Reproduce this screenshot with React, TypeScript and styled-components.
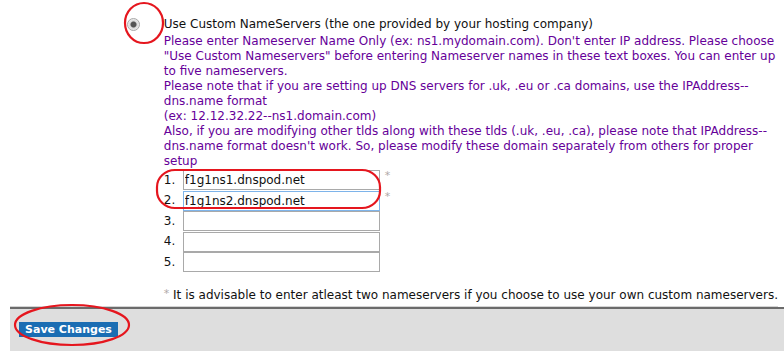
import styled, { createGlobalStyle } from "styled-components";

const GlobalStyle = createGlobalStyle`
  html, body {
    margin: 0;
    padding: 0;
    background: #fff;
  }
  body {
    font-family: "DejaVu Sans", Verdana, sans-serif;
    font-size: 12px;
  }
`;

const servers = ["f1g1ns1.dnspod.net", "f1g1ns2.dnspod.net", "", "", ""];

function App() {
  return (
    <Page>
      <GlobalStyle />
      <Content>
        <Option>
          <RadioCell>
            <Radio />
          </RadioCell>
          <OptionBody>
            <OptionLabel>Use Custom NameServers (the one provided by your hosting company)</OptionLabel>
            <Help>
              Please enter Nameserver Name Only (ex: ns1.mydomain.com). Don't enter IP address. Please choose
              <br />
              "Use Custom Nameservers" before entering Nameserver names in these text boxes. You can enter up
              <br />
              to five nameservers.
              <br />
              Please note that if you are setting up DNS servers for .uk, .eu or .ca domains, use the IPAddress--
              <br />
              dns.name format
              <br />
              (ex: 12.12.32.22--ns1.domain.com)
              <br />
              Also, if you are modifying other tlds along with these tlds (.uk, .eu, .ca), please note that IPAddress--
              <br />
              dns.name format doesn't work. So, please modify these domain separately from others for proper
              <br />
              setup
            </Help>
            <ServerList>
              {servers.map((value, i) => (
                <ServerRow key={i}>
                  <RowNumber>{i + 1}.</RowNumber>
                  <ServerInput defaultValue={value} $focused={i === 1} />
                  {i < 2 && <Required>*</Required>}
                </ServerRow>
              ))}
            </ServerList>
            <Note>
              <Required>*</Required> It is advisable to enter atleast two nameservers if you choose to use your own custom nameservers.
            </Note>
          </OptionBody>
        </Option>
      </Content>
      <ActionBar>
        <SaveButton type="button">Save Changes</SaveButton>
      </ActionBar>

      <Marks viewBox="0 0 784 351" width="784" height="351">
        <ellipse cx="144" cy="23" rx="19" ry="20" />
        <rect x="157" y="170" width="223" height="38" rx="18" ry="17" />
        <ellipse cx="72" cy="325" rx="57" ry="20" />
      </Marks>
    </Page>
  );
}

const Page = styled.div`
  position: relative;
  width: 784px;
  height: 351px;
  overflow: hidden;
  padding-left: 10px;
  box-sizing: border-box;
`;

const Content = styled.div`
  padding-top: 17px;
  margin-right: 6px;
  height: 307px;
  border-bottom: 1px solid #d4d4d4;
  box-sizing: border-box;
`;

const Option = styled.div`
  display: flex;
`;

const RadioCell = styled.div`
  width: 131px;
  display: flex;
  justify-content: flex-end;
  padding-right: 24px;
`;

const Radio = styled.span`
  margin-top: 1px;
  width: 13px;
  height: 13px;
  border-radius: 50%;
  box-sizing: border-box;
  border: 1px solid #a8a8a8;
  background: radial-gradient(circle, #555 0 2.5px, #d8d8d8 3.5px, #f2f2f2 6px);
`;

const OptionBody = styled.div`
  display: flex;
  flex-direction: column;
  line-height: 15px;
  white-space: nowrap;
`;

const OptionLabel = styled.div`
  color: #111;
`;

const Help = styled.div`
  margin-top: 2px;
  color: #660099;
`;

const ServerList = styled.div`
  margin-top: 1px;
  display: flex;
  flex-direction: column;
  gap: 0.5px;
`;

const ServerRow = styled.div`
  display: flex;
  align-items: center;
  height: 20px;
`;

const RowNumber = styled.span`
  width: 19px;
  color: #111;
`;

const ServerInput = styled.input<{ $focused?: boolean }>`
  width: 197px;
  height: 20px;
  box-sizing: border-box;
  margin: 0;
  padding: 0 1px;
  font-family: "DejaVu Sans", Verdana, sans-serif;
  font-size: 12px;
  color: #111;
  outline: none;
  border: 1px solid ${(p) => (p.$focused ? "#7eb4ea" : "#a9a9a9")};
  position: relative;
  z-index: ${(p) => (p.$focused ? 1 : 0)};
`;

const Required = styled.span`
  color: #b0a8a8;
  font-size: 11px;
  align-self: flex-start;
  margin-left: 5px;
  line-height: 12px;
`;

const Note = styled.div`
  margin-top: 16px;
  color: #111;

  ${Required} {
    margin-left: 0;
    vertical-align: 2px;
  }
`;

const ActionBar = styled.div`
  height: 44px;
  background: #dedede;
  border-top: 2px solid #6b6b6b;
  padding: 13px 9px 0;
  box-sizing: border-box;
`;

const SaveButton = styled.button`
  display: block;
  margin: 0;
  border: none;
  height: 15px;
  width: 99px;
  padding: 0;
  background: #1a6db3;
  color: #fff;
  font-family: "DejaVu Sans", Verdana, sans-serif;
  font-size: 11px;
  font-weight: bold;
  line-height: 15px;
`;

const Marks = styled.svg`
  position: absolute;
  left: 0;
  top: 0;
  z-index: 5;
  pointer-events: none;

  ellipse,
  rect {
    fill: none;
    stroke: #e5161e;
    stroke-width: 2.2;
  }
`;

export default App;
